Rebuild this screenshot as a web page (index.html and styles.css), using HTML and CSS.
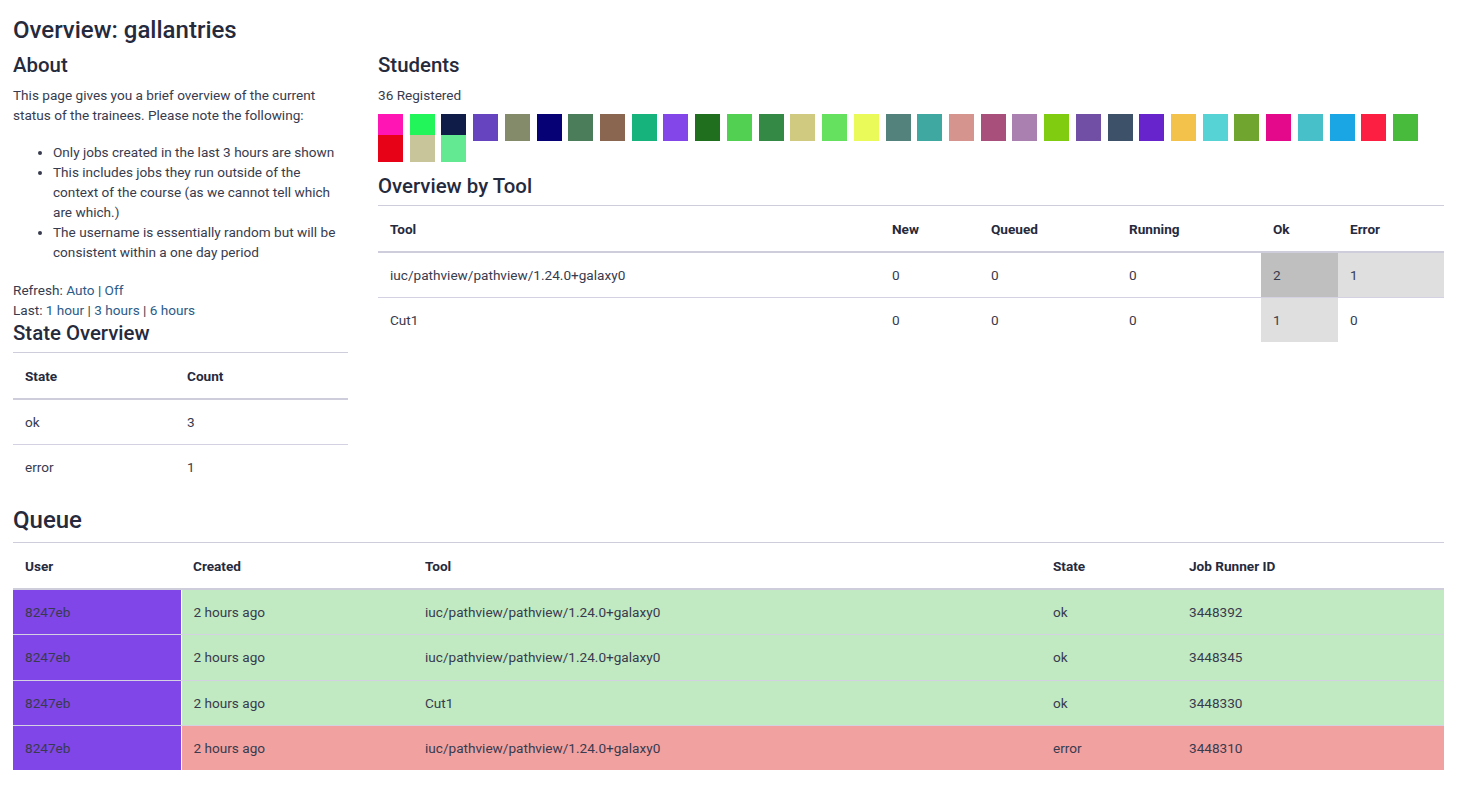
FILE: index.html
```html
<!DOCTYPE html>
<html lang="en">
<head>
<meta charset="utf-8">
<title>Overview: gallantries</title>
<link rel="stylesheet" href="styles.css">
</head>
<body>
<main class="page">
  <h1 class="title">Overview: gallantries</h1>
  <div class="top">
    <section class="side">
      <h2 class="heading">About</h2>
      <p class="about">This page gives you a brief overview of the current status of the trainees. Please note the following:</p>
      <ul class="notes">
        <li>Only jobs created in the last 3 hours are shown</li>
        <li>This includes jobs they run outside of the context of the course (as we cannot tell which are which.)</li>
        <li>The username is essentially random but will be consistent within a one day period</li>
      </ul>
      <p class="controls">Refresh: <a href="#">Auto</a> | <a href="#">Off</a><br>Last: <a href="#">1 hour</a> | <a href="#">3 hours</a> | <a href="#">6 hours</a></p>
      <h2 class="heading">State Overview</h2>
      <table class="grid state-table">
        <thead>
          <tr><th class="c-state">State</th><th class="c-count">Count</th></tr>
        </thead>
        <tbody>
          <tr><td>ok</td><td>3</td></tr>
          <tr><td>error</td><td>1</td></tr>
        </tbody>
      </table>
    </section>
    <section class="main">
      <h2 class="heading">Students</h2>
      <p class="registered">36 Registered</p>
      <div class="students">
        <span class="sq" style="background:#ff14b4"></span>
        <span class="sq" style="background:#22f55a"></span>
        <span class="sq" style="background:#0f1c47"></span>
        <span class="sq" style="background:#6644bf"></span>
        <span class="sq" style="background:#838b6a"></span>
        <span class="sq" style="background:#060275"></span>
        <span class="sq" style="background:#4c7d5a"></span>
        <span class="sq" style="background:#8a6550"></span>
        <span class="sq" style="background:#16b47c"></span>
        <span class="sq" style="background:#8346e8"></span>
        <span class="sq" style="background:#1f6f1f"></span>
        <span class="sq" style="background:#52d052"></span>
        <span class="sq" style="background:#348a45"></span>
        <span class="sq" style="background:#cfca7f"></span>
        <span class="sq" style="background:#66e05f"></span>
        <span class="sq" style="background:#eafb59"></span>
        <span class="sq" style="background:#53817c"></span>
        <span class="sq" style="background:#3fa8a0"></span>
        <span class="sq" style="background:#d5948d"></span>
        <span class="sq" style="background:#a84f7b"></span>
        <span class="sq" style="background:#aa80b0"></span>
        <span class="sq" style="background:#80cc10"></span>
        <span class="sq" style="background:#704fa5"></span>
        <span class="sq" style="background:#3d5269"></span>
        <span class="sq" style="background:#6724cc"></span>
        <span class="sq" style="background:#f3c24a"></span>
        <span class="sq" style="background:#55d3d5"></span>
        <span class="sq" style="background:#70a530"></span>
        <span class="sq" style="background:#e3098a"></span>
        <span class="sq" style="background:#48c0c9"></span>
        <span class="sq" style="background:#1aa6e4"></span>
        <span class="sq" style="background:#fc1f41"></span>
        <span class="sq" style="background:#48bb3c"></span>
        <span class="sq" style="background:#e80218"></span>
        <span class="sq" style="background:#c8c59a"></span>
        <span class="sq" style="background:#62e992"></span>
      </div>
      <h2 class="heading">Overview by Tool</h2>
      <table class="grid tool-table">
        <thead>
          <tr>
            <th class="c-tool">Tool</th>
            <th class="c-new">New</th>
            <th class="c-queued">Queued</th>
            <th class="c-running">Running</th>
            <th class="c-ok">Ok</th>
            <th class="c-error">Error</th>
          </tr>
        </thead>
        <tbody>
          <tr>
            <td>iuc/pathview/pathview/1.24.0+galaxy0</td>
            <td>0</td><td>0</td><td>0</td>
            <td class="shade-2">2</td>
            <td class="shade-1">1</td>
          </tr>
          <tr>
            <td>Cut1</td>
            <td>0</td><td>0</td><td>0</td>
            <td class="shade-1">1</td>
            <td>0</td>
          </tr>
        </tbody>
      </table>
    </section>
  </div>
  <h2 class="heading queue-heading">Queue</h2>
  <table class="grid queue-table">
    <thead>
      <tr>
        <th class="c-user">User</th>
        <th class="c-created">Created</th>
        <th class="c-qtool">Tool</th>
        <th class="c-qstate">State</th>
        <th class="c-runner">Job Runner ID</th>
      </tr>
    </thead>
    <tbody>
      <tr class="row-ok">
        <td class="user" style="background:#8046e8">8247eb</td>
        <td>2 hours ago</td>
        <td>iuc/pathview/pathview/1.24.0+galaxy0</td>
        <td>ok</td>
        <td>3448392</td>
      </tr>
      <tr class="row-ok">
        <td class="user" style="background:#8046e8">8247eb</td>
        <td>2 hours ago</td>
        <td>iuc/pathview/pathview/1.24.0+galaxy0</td>
        <td>ok</td>
        <td>3448345</td>
      </tr>
      <tr class="row-ok">
        <td class="user" style="background:#8046e8">8247eb</td>
        <td>2 hours ago</td>
        <td>Cut1</td>
        <td>ok</td>
        <td>3448330</td>
      </tr>
      <tr class="row-error">
        <td class="user" style="background:#8046e8">8247eb</td>
        <td>2 hours ago</td>
        <td>iuc/pathview/pathview/1.24.0+galaxy0</td>
        <td>error</td>
        <td>3448310</td>
      </tr>
    </tbody>
  </table>
</main>
</body>
</html>
```

FILE: styles.css
```css
html, body {
  margin: 0;
  padding: 0;
  background: #ffffff;
}

body {
  font-family: Roboto, "Noto Sans", sans-serif;
  font-size: 13.6px;
  line-height: 20px;
  color: #383b4e;
}

.page {
  padding: 16px 25px 20px 13px;
}

.title {
  margin: 0 0 8px;
  font-size: 24px;
  line-height: 29px;
  font-weight: 500;
  color: #262a3d;
}

.top {
  display: grid;
  grid-template-columns: 335px minmax(0, 1fr);
  column-gap: 30px;
  align-items: start;
}

.heading {
  margin: 0 0 7px;
  font-size: 20.4px;
  line-height: 24px;
  font-weight: 500;
  color: #262a3d;
}

.about {
  margin: 8px 0 17px;
}

.notes {
  margin: 0 0 18px;
  padding-left: 40px;
}

.controls {
  margin: 0 0 1px;
}

.controls a {
  color: #2c5b88;
  text-decoration: none;
}

.registered {
  margin: 8px 0 9px;
}

.students {
  display: flex;
  flex-wrap: wrap;
  column-gap: 6.72px;
  margin-bottom: 18px;
}

.sq {
  display: block;
  width: 25px;
  height: 27px;
  margin-bottom: -6px;
}

.grid {
  width: 100%;
  border-collapse: collapse;
  table-layout: fixed;
  border-top: 1px solid #cdcddc;
}

.grid th,
.grid td {
  box-sizing: border-box;
  padding: 12px;
  text-align: left;
  line-height: 20.3px;
  white-space: nowrap;
}

.grid th {
  padding-top: 12.5px;
  font-weight: 700;
  color: #262a3d;
  border-bottom: 2px solid #cdcddc;
}

.grid td {
  border-bottom: 1px solid #d4d2e2;
}

.grid tbody tr:last-child td {
  border-bottom: none;
}

.c-state { width: 162px; }
.c-count { width: auto; }

.c-tool { width: 502px; }
.c-new { width: 99px; }
.c-queued { width: 138px; }
.c-running { width: 144px; }
.c-ok { width: 77px; }
.c-error { width: auto; }

.shade-2 { background: #bfbfbf; }
.shade-1 { background: #dfdfdf; }

.queue-heading {
  margin-top: 17px;
  margin-bottom: 7px;
  font-size: 24px;
  line-height: 29px;
}

.c-user { width: 168px; }
.c-created { width: 232px; }
.c-qtool { width: 628px; }
.c-qstate { width: 136px; }
.c-runner { width: auto; }

.row-ok td { background: #c2eac2; }
.row-error td { background: #f2a1a1; }
.queue-table td.user { border-right: 1px solid #ffffff; }
```
